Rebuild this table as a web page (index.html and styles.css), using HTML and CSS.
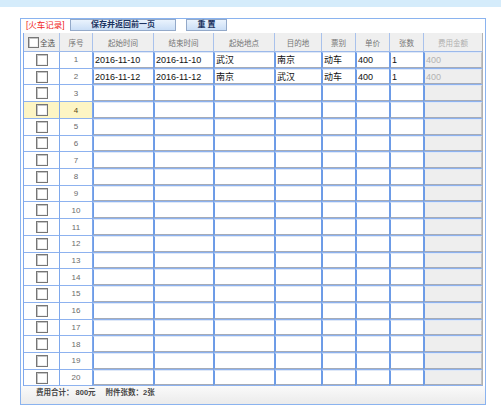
FILE: index.html
```html
<!DOCTYPE html>
<html lang="zh-CN">
<head>
<meta charset="utf-8">
<title>火车记录</title>
<link rel="stylesheet" href="styles.css">
</head>
<body>
<div class="topbar"></div>
<div class="sheet">
  <div class="toolbar">
    <span class="title">[火车记录]</span>
    <button class="btn btn-save">保存并返回前一页</button>
    <button class="btn btn-reset">重 置</button>
  </div>
  <div class="grid">
    <div class="h h-all"><span class="box"></span>全选</div>
    <div class="h">序号</div>
    <div class="h">起始时间</div>
    <div class="h">结束时间</div>
    <div class="h">起始地点</div>
    <div class="h">目的地</div>
    <div class="h">票别</div>
    <div class="h">单价</div>
    <div class="h">张数</div>
    <div class="h h-fee">费用金额</div>

    <div class="c ck"><span class="box"></span></div><div class="c no">1</div>
    <div class="c f"><div class="inp">2016-11-10</div></div><div class="c f"><div class="inp">2016-11-10</div></div><div class="c f"><div class="inp">武汉</div></div><div class="c f"><div class="inp">南京</div></div><div class="c f"><div class="inp">动车</div></div><div class="c f"><div class="inp">400</div></div><div class="c f"><div class="inp">1</div></div><div class="c f fee"><div class="inp">400</div></div>

    <div class="c ck"><span class="box"></span></div><div class="c no">2</div>
    <div class="c f"><div class="inp">2016-11-12</div></div><div class="c f"><div class="inp">2016-11-12</div></div><div class="c f"><div class="inp">南京</div></div><div class="c f"><div class="inp">武汉</div></div><div class="c f"><div class="inp">动车</div></div><div class="c f"><div class="inp">400</div></div><div class="c f"><div class="inp">1</div></div><div class="c f fee"><div class="inp">400</div></div>

    <div class="c ck"><span class="box"></span></div><div class="c no">3</div>
    <div class="c f"><div class="inp"></div></div><div class="c f"><div class="inp"></div></div><div class="c f"><div class="inp"></div></div><div class="c f"><div class="inp"></div></div><div class="c f"><div class="inp"></div></div><div class="c f"><div class="inp"></div></div><div class="c f"><div class="inp"></div></div><div class="c f fee"><div class="inp"></div></div>

    <div class="c ck hl"><span class="box"></span></div><div class="c no hl">4</div>
    <div class="c f"><div class="inp"></div></div><div class="c f"><div class="inp"></div></div><div class="c f"><div class="inp"></div></div><div class="c f"><div class="inp"></div></div><div class="c f"><div class="inp"></div></div><div class="c f"><div class="inp"></div></div><div class="c f"><div class="inp"></div></div><div class="c f fee"><div class="inp"></div></div>

    <div class="c ck"><span class="box"></span></div><div class="c no">5</div>
    <div class="c f"><div class="inp"></div></div><div class="c f"><div class="inp"></div></div><div class="c f"><div class="inp"></div></div><div class="c f"><div class="inp"></div></div><div class="c f"><div class="inp"></div></div><div class="c f"><div class="inp"></div></div><div class="c f"><div class="inp"></div></div><div class="c f fee"><div class="inp"></div></div>

    <div class="c ck"><span class="box"></span></div><div class="c no">6</div>
    <div class="c f"><div class="inp"></div></div><div class="c f"><div class="inp"></div></div><div class="c f"><div class="inp"></div></div><div class="c f"><div class="inp"></div></div><div class="c f"><div class="inp"></div></div><div class="c f"><div class="inp"></div></div><div class="c f"><div class="inp"></div></div><div class="c f fee"><div class="inp"></div></div>

    <div class="c ck"><span class="box"></span></div><div class="c no">7</div>
    <div class="c f"><div class="inp"></div></div><div class="c f"><div class="inp"></div></div><div class="c f"><div class="inp"></div></div><div class="c f"><div class="inp"></div></div><div class="c f"><div class="inp"></div></div><div class="c f"><div class="inp"></div></div><div class="c f"><div class="inp"></div></div><div class="c f fee"><div class="inp"></div></div>

    <div class="c ck"><span class="box"></span></div><div class="c no">8</div>
    <div class="c f"><div class="inp"></div></div><div class="c f"><div class="inp"></div></div><div class="c f"><div class="inp"></div></div><div class="c f"><div class="inp"></div></div><div class="c f"><div class="inp"></div></div><div class="c f"><div class="inp"></div></div><div class="c f"><div class="inp"></div></div><div class="c f fee"><div class="inp"></div></div>

    <div class="c ck"><span class="box"></span></div><div class="c no">9</div>
    <div class="c f"><div class="inp"></div></div><div class="c f"><div class="inp"></div></div><div class="c f"><div class="inp"></div></div><div class="c f"><div class="inp"></div></div><div class="c f"><div class="inp"></div></div><div class="c f"><div class="inp"></div></div><div class="c f"><div class="inp"></div></div><div class="c f fee"><div class="inp"></div></div>

    <div class="c ck"><span class="box"></span></div><div class="c no">10</div>
    <div class="c f"><div class="inp"></div></div><div class="c f"><div class="inp"></div></div><div class="c f"><div class="inp"></div></div><div class="c f"><div class="inp"></div></div><div class="c f"><div class="inp"></div></div><div class="c f"><div class="inp"></div></div><div class="c f"><div class="inp"></div></div><div class="c f fee"><div class="inp"></div></div>

    <div class="c ck"><span class="box"></span></div><div class="c no">11</div>
    <div class="c f"><div class="inp"></div></div><div class="c f"><div class="inp"></div></div><div class="c f"><div class="inp"></div></div><div class="c f"><div class="inp"></div></div><div class="c f"><div class="inp"></div></div><div class="c f"><div class="inp"></div></div><div class="c f"><div class="inp"></div></div><div class="c f fee"><div class="inp"></div></div>

    <div class="c ck"><span class="box"></span></div><div class="c no">12</div>
    <div class="c f"><div class="inp"></div></div><div class="c f"><div class="inp"></div></div><div class="c f"><div class="inp"></div></div><div class="c f"><div class="inp"></div></div><div class="c f"><div class="inp"></div></div><div class="c f"><div class="inp"></div></div><div class="c f"><div class="inp"></div></div><div class="c f fee"><div class="inp"></div></div>

    <div class="c ck"><span class="box"></span></div><div class="c no">13</div>
    <div class="c f"><div class="inp"></div></div><div class="c f"><div class="inp"></div></div><div class="c f"><div class="inp"></div></div><div class="c f"><div class="inp"></div></div><div class="c f"><div class="inp"></div></div><div class="c f"><div class="inp"></div></div><div class="c f"><div class="inp"></div></div><div class="c f fee"><div class="inp"></div></div>

    <div class="c ck"><span class="box"></span></div><div class="c no">14</div>
    <div class="c f"><div class="inp"></div></div><div class="c f"><div class="inp"></div></div><div class="c f"><div class="inp"></div></div><div class="c f"><div class="inp"></div></div><div class="c f"><div class="inp"></div></div><div class="c f"><div class="inp"></div></div><div class="c f"><div class="inp"></div></div><div class="c f fee"><div class="inp"></div></div>

    <div class="c ck"><span class="box"></span></div><div class="c no">15</div>
    <div class="c f"><div class="inp"></div></div><div class="c f"><div class="inp"></div></div><div class="c f"><div class="inp"></div></div><div class="c f"><div class="inp"></div></div><div class="c f"><div class="inp"></div></div><div class="c f"><div class="inp"></div></div><div class="c f"><div class="inp"></div></div><div class="c f fee"><div class="inp"></div></div>

    <div class="c ck"><span class="box"></span></div><div class="c no">16</div>
    <div class="c f"><div class="inp"></div></div><div class="c f"><div class="inp"></div></div><div class="c f"><div class="inp"></div></div><div class="c f"><div class="inp"></div></div><div class="c f"><div class="inp"></div></div><div class="c f"><div class="inp"></div></div><div class="c f"><div class="inp"></div></div><div class="c f fee"><div class="inp"></div></div>

    <div class="c ck"><span class="box"></span></div><div class="c no">17</div>
    <div class="c f"><div class="inp"></div></div><div class="c f"><div class="inp"></div></div><div class="c f"><div class="inp"></div></div><div class="c f"><div class="inp"></div></div><div class="c f"><div class="inp"></div></div><div class="c f"><div class="inp"></div></div><div class="c f"><div class="inp"></div></div><div class="c f fee"><div class="inp"></div></div>

    <div class="c ck"><span class="box"></span></div><div class="c no">18</div>
    <div class="c f"><div class="inp"></div></div><div class="c f"><div class="inp"></div></div><div class="c f"><div class="inp"></div></div><div class="c f"><div class="inp"></div></div><div class="c f"><div class="inp"></div></div><div class="c f"><div class="inp"></div></div><div class="c f"><div class="inp"></div></div><div class="c f fee"><div class="inp"></div></div>

    <div class="c ck"><span class="box"></span></div><div class="c no">19</div>
    <div class="c f"><div class="inp"></div></div><div class="c f"><div class="inp"></div></div><div class="c f"><div class="inp"></div></div><div class="c f"><div class="inp"></div></div><div class="c f"><div class="inp"></div></div><div class="c f"><div class="inp"></div></div><div class="c f"><div class="inp"></div></div><div class="c f fee"><div class="inp"></div></div>

    <div class="c ck"><span class="box"></span></div><div class="c no">20</div>
    <div class="c f"><div class="inp"></div></div><div class="c f"><div class="inp"></div></div><div class="c f"><div class="inp"></div></div><div class="c f"><div class="inp"></div></div><div class="c f"><div class="inp"></div></div><div class="c f"><div class="inp"></div></div><div class="c f"><div class="inp"></div></div><div class="c f fee"><div class="inp"></div></div>
  </div>
  <div class="footer">
    <span>费用合计： 800元</span>
    <span class="attach">附件张数：2张</span>
  </div>
</div>
</body>
</html>
```

FILE: styles.css
```css
* {
  box-sizing: border-box;
  margin: 0;
  padding: 0;
}

body {
  background: #fff;
  font-family: "Liberation Sans", "Noto Sans CJK SC", sans-serif;
}

.topbar {
  width: 501px;
  height: 7px;
  background: #d5ecfb;
}

.sheet {
  margin: 11px 0 0 20px;
  width: 466px;
  height: 387px;
  border: 1px solid #8ab3ef;
  display: flex;
  flex-direction: column;
}

.toolbar {
  height: 14px;
  flex: none;
  display: flex;
  align-items: flex-start;
  padding-left: 5px;
}

.title {
  width: 44px;
  color: #f01d1d;
  font-size: 8.5px;
  line-height: 12px;
  white-space: nowrap;
}

.btn {
  height: 12px;
  border: 1px solid #93a9c9;
  background: linear-gradient(#eaf3fd, #cadef6);
  font-family: inherit;
  font-weight: bold;
  font-size: 8px;
  line-height: 10px;
  color: #1c3461;
  display: flex;
  align-items: center;
  justify-content: center;
  white-space: pre;
}

.btn-save {
  width: 106px;
}

.btn-reset {
  width: 41px;
  margin-left: 10px;
}

.grid {
  flex: none;
  margin-left: 2px;
  width: 460px;
  display: grid;
  grid-template-columns: 36px 33px 61px 60px 61px 47px 34px 34px 34px 59px;
  grid-template-rows: 19px;
  grid-auto-rows: 16.73px;
  border-left: 1px solid #7fa8ec;
}

.h {
  background: #efefef;
  border-right: 1px solid #a9c2ec;
  border-bottom: 1px solid #9cb9ea;
  color: #747474;
  font-size: 7.5px;
  display: flex;
  align-items: center;
  justify-content: center;
  white-space: nowrap;
}

.h-all {
  color: #505050;
}

.h-all .box {
  width: 11px;
  height: 11px;
  margin-right: 1px;
}

.h-fee {
  color: #b0b0b0;
  border-right-color: #b4b4b4;
}

.c {
  border-right: 1px solid #7ea8ec;
  border-bottom: 1px solid #8db2ef;
  display: flex;
  align-items: center;
  justify-content: center;
  background: #fff;
}

.box {
  display: inline-block;
  width: 12px;
  height: 12px;
  border: 1px solid #767676;
  background: #fff;
  box-shadow: inset 1px 1px 0 #c4c4c4, inset -1px -1px 0 #f0f0f0;
}

.no {
  color: #6a6a6a;
  font-size: 8px;
}

.hl {
  background: #fdf5c4;
}

.no.hl {
  color: #5a4a18;
}

.f {
  border-right-color: #6e9de8;
  align-items: stretch;
  justify-content: stretch;
}

.inp {
  flex: 1;
  min-width: 0;
  border-left: 1px solid #6c9be6;
  border-top: 1px solid #dfe8f7;
  border-bottom: 1px solid #a5abb7;
  background: #fff;
  padding-left: 1px;
  display: flex;
  align-items: center;
  font-size: 9px;
  color: #111;
  white-space: nowrap;
  overflow: hidden;
}

.fee {
  border-right-color: #b0b0b0;
}

.fee .inp {
  background: #eeeeee;
  color: #b3b3b3;
  border-right: 1px solid #c4c4c4;
}

.footer {
  flex: 1;
  background: linear-gradient(#fafafa, #ebebeb);
  padding: 2px 0 0 15px;
  font-size: 7.5px;
  line-height: 9px;
  font-weight: bold;
  color: #444;
  display: flex;
  white-space: pre;
}

.attach {
  margin-left: 10px;
}
```
